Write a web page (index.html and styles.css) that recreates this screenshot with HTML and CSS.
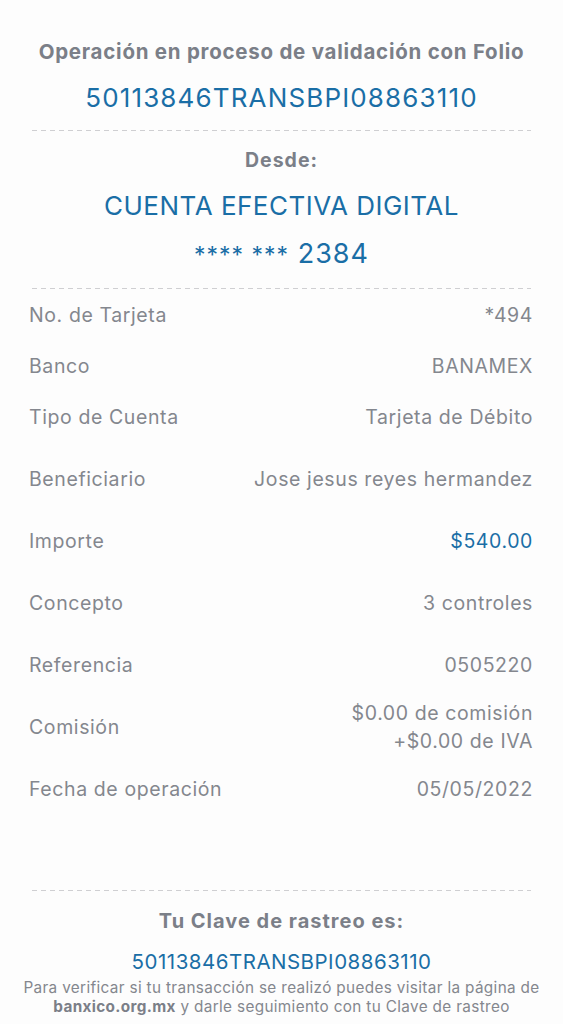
FILE: index.html
```html
<!DOCTYPE html>
<html lang="es">
<head>
<meta charset="utf-8">
<title>Comprobante</title>
<link rel="stylesheet" href="styles.css">
</head>
<body>
<main class="receipt">
  <section class="head">
    <h1 class="title">Operación en proceso de validación con Folio</h1>
    <p class="folio">50113846TRANSBPI08863110</p>
  </section>
  <div class="divider"></div>
  <section class="from">
    <h2 class="label-bold">Desde:</h2>
    <p class="account">CUENTA EFECTIVA DIGITAL</p>
    <p class="account-num"><span class="stars">**** ***</span> 2384</p>
  </section>
  <div class="divider"></div>
  <section class="rows-top">
    <div class="row"><span class="k">No. de Tarjeta</span><span class="v">*494</span></div>
    <div class="row"><span class="k">Banco</span><span class="v">BANAMEX</span></div>
    <div class="row"><span class="k">Tipo de Cuenta</span><span class="v">Tarjeta de Débito</span></div>
  </section>
  <section class="rows">
    <div class="row"><span class="k">Beneficiario</span><span class="v">Jose jesus reyes hermandez</span></div>
    <div class="row"><span class="k">Importe</span><span class="v blue">$540.00</span></div>
    <div class="row"><span class="k">Concepto</span><span class="v">3 controles</span></div>
    <div class="row"><span class="k">Referencia</span><span class="v">0505220</span></div>
    <div class="row"><span class="k">Comisión</span><span class="v two">$0.00 de comisión<br>+$0.00 de IVA</span></div>
    <div class="row"><span class="k">Fecha de operación</span><span class="v">05/05/2022</span></div>
  </section>
  <div class="divider bottom"></div>
  <section class="track">
    <h2 class="label-bold track-title">Tu Clave de rastreo es:</h2>
    <p class="track-code">50113846TRANSBPI08863110</p>
    <p class="note">Para verificar si tu transacción se realizó puedes visitar la página de<br><b>banxico.org.mx</b> y darle seguimiento con tu Clave de rastreo</p>
  </section>
</main>
</body>
</html>
```

FILE: styles.css
```css
* { box-sizing: border-box; }
html, body { margin: 0; padding: 0; background: #fdfdfd; }
body {
  font-family: Inter, "Noto Sans", "Liberation Sans", sans-serif;
  color: #84878e;
  width: 563px;
  height: 1024px;
  overflow: hidden;
}
h1, h2, p { margin: 0; font-weight: normal; }
.receipt { display: flex; flex-direction: column; }
.head { padding-top: 38px; text-align: center; }
.title {
  font-size: 20.5px; line-height: 28px; font-weight: 700; color: #7b7f88;
  letter-spacing: 0.75px; white-space: nowrap;
}
.folio {
  margin-top: 15px; font-size: 26px; line-height: 34px; color: #1a6ea6;
  letter-spacing: 1.15px;
}
.divider {
  margin: 15px 32px 0 32px; height: 1px;
  background: repeating-linear-gradient(to right, #cfcfd2 0 5px, transparent 5px 9px);
}
.from { text-align: center; padding-top: 16px; }
.label-bold {
  font-size: 19.5px; line-height: 26px; font-weight: 700; color: #7b7f88;
  letter-spacing: 1px;
}
.account {
  margin-top: 16px; font-size: 26px; line-height: 34px; color: #1a6ea6;
  letter-spacing: 0.5px;
}
.account-num {
  margin-top: 14px; font-size: 27px; line-height: 34px; color: #1a6ea6;
  letter-spacing: 1px;
}
.stars { font-size: 23px; }
.from + .divider { margin-top: 16px; }
.rows-top, .rows { padding: 0 30px 0 29px; display: flex; flex-direction: column; }
.rows-top .row { height: 51px; }
.rows { margin-top: 6px; }
.rows .row { height: 62px; }
.row {
  display: flex; justify-content: space-between; align-items: center;
  font-size: 19.5px; line-height: 28px; color: #84878e; letter-spacing: 0.6px;
}
.v { text-align: right; }
.v.blue { color: #1a6ea6; }
.divider.bottom { margin-top: 70px; }
.track { text-align: center; padding-top: 17px; }
.track-title { font-size: 20px; }
.track-code {
  margin-top: 14px; font-size: 20.5px; line-height: 28px; color: #1a6ea6;
  letter-spacing: 0.5px;
}
.note {
  margin-top: 2px; font-size: 15.3px; line-height: 19px; color: #84878e;
  letter-spacing: 0.35px; white-space: nowrap;
}
.note b { font-weight: 700; color: #7b7f88; }
```
